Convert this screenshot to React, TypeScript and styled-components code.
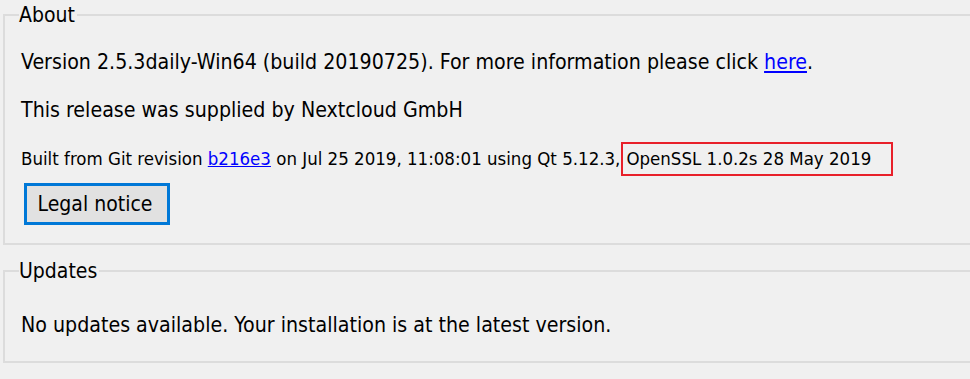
import React from "react";
import styled, { createGlobalStyle } from "styled-components";

const GlobalStyle = createGlobalStyle`
  html, body {
    margin: 0;
    padding: 0;
    background: #f0f0f0;
    overflow: hidden;
  }
  body {
    font-family: "DejaVu Sans Condensed", "DejaVu Sans", sans-serif;
    color: #000;
  }
`;

const Page = styled.div`
  width: 970px;
  height: 379px;
  padding: 4px 0 0 3px;
  box-sizing: border-box;
  display: flex;
  flex-direction: column;
  gap: 15px;
`;

const Group = styled.fieldset<{ $h: number }>`
  margin: 0;
  width: 1000px;
  height: ${(p) => p.$h}px;
  border: 2px solid #dcdcdc;
  border-right: none;
  padding: 0 0 0 15px;
  box-sizing: border-box;
`;

const Legend = styled.legend`
  font-size: 21px;
  padding: 0 2px 0 0;
  margin-left: -1px;
  line-height: 22px;
`;

const Rows = styled.div<{ $pad: string }>`
  display: flex;
  flex-direction: column;
  align-items: flex-start;
  padding: ${(p) => p.$pad};
`;

const Line = styled.div<{ $small?: boolean; $h: number }>`
  font-size: ${(p) => (p.$small ? "18.5px" : "21.2px")};
  height: ${(p) => p.$h}px;
  line-height: ${(p) => p.$h}px;
  white-space: nowrap;
`;

const Link = styled.a`
  color: #0000ff;
  text-decoration: underline;
  cursor: pointer;
`;

const Highlight = styled.span`
  display: inline-block;
  height: 34px;
  line-height: 30px;
  box-sizing: border-box;
  border: 2px solid #e8202a;
  padding: 0 20px 0 3px;
  margin-left: 1px;
`;

const Button = styled.button`
  margin: 0 0 0 3px;
  width: 146px;
  height: 42px;
  border: 3px solid #0078d7;
  background: #e1e1e1;
  font-family: inherit;
  font-size: 21px;
  color: #000;
  padding: 0 4px 0 0;
`;

export default function App() {
  return (
    <>
      <GlobalStyle />
      <Page>
        <Group $h={241}>
          <Legend>About</Legend>
          <Rows $pad="12px 0 0 1px">
            <Line $h={48}>
              Version 2.5.3daily-Win64 (build 20190725). For more information
              please click <Link>here</Link>.
            </Line>
            <Line $h={48}>This release was supplied by Nextcloud GmbH</Line>
            <Line $small $h={49}>
              Built from Git revision <Link>b216e3</Link> on Jul 25 2019,
              11:08:01 using Qt 5.12.3,
              <Highlight>OpenSSL 1.0.2s 28 May 2019</Highlight>
            </Line>
            <Button>Legal notice</Button>
          </Rows>
        </Group>
        <Group $h={103}>
          <Legend>Updates</Legend>
          <Rows $pad="30px 0 0 1px">
            <Line $h={26}>
              No updates available. Your installation is at the latest version.
            </Line>
          </Rows>
        </Group>
      </Page>
    </>
  );
}
